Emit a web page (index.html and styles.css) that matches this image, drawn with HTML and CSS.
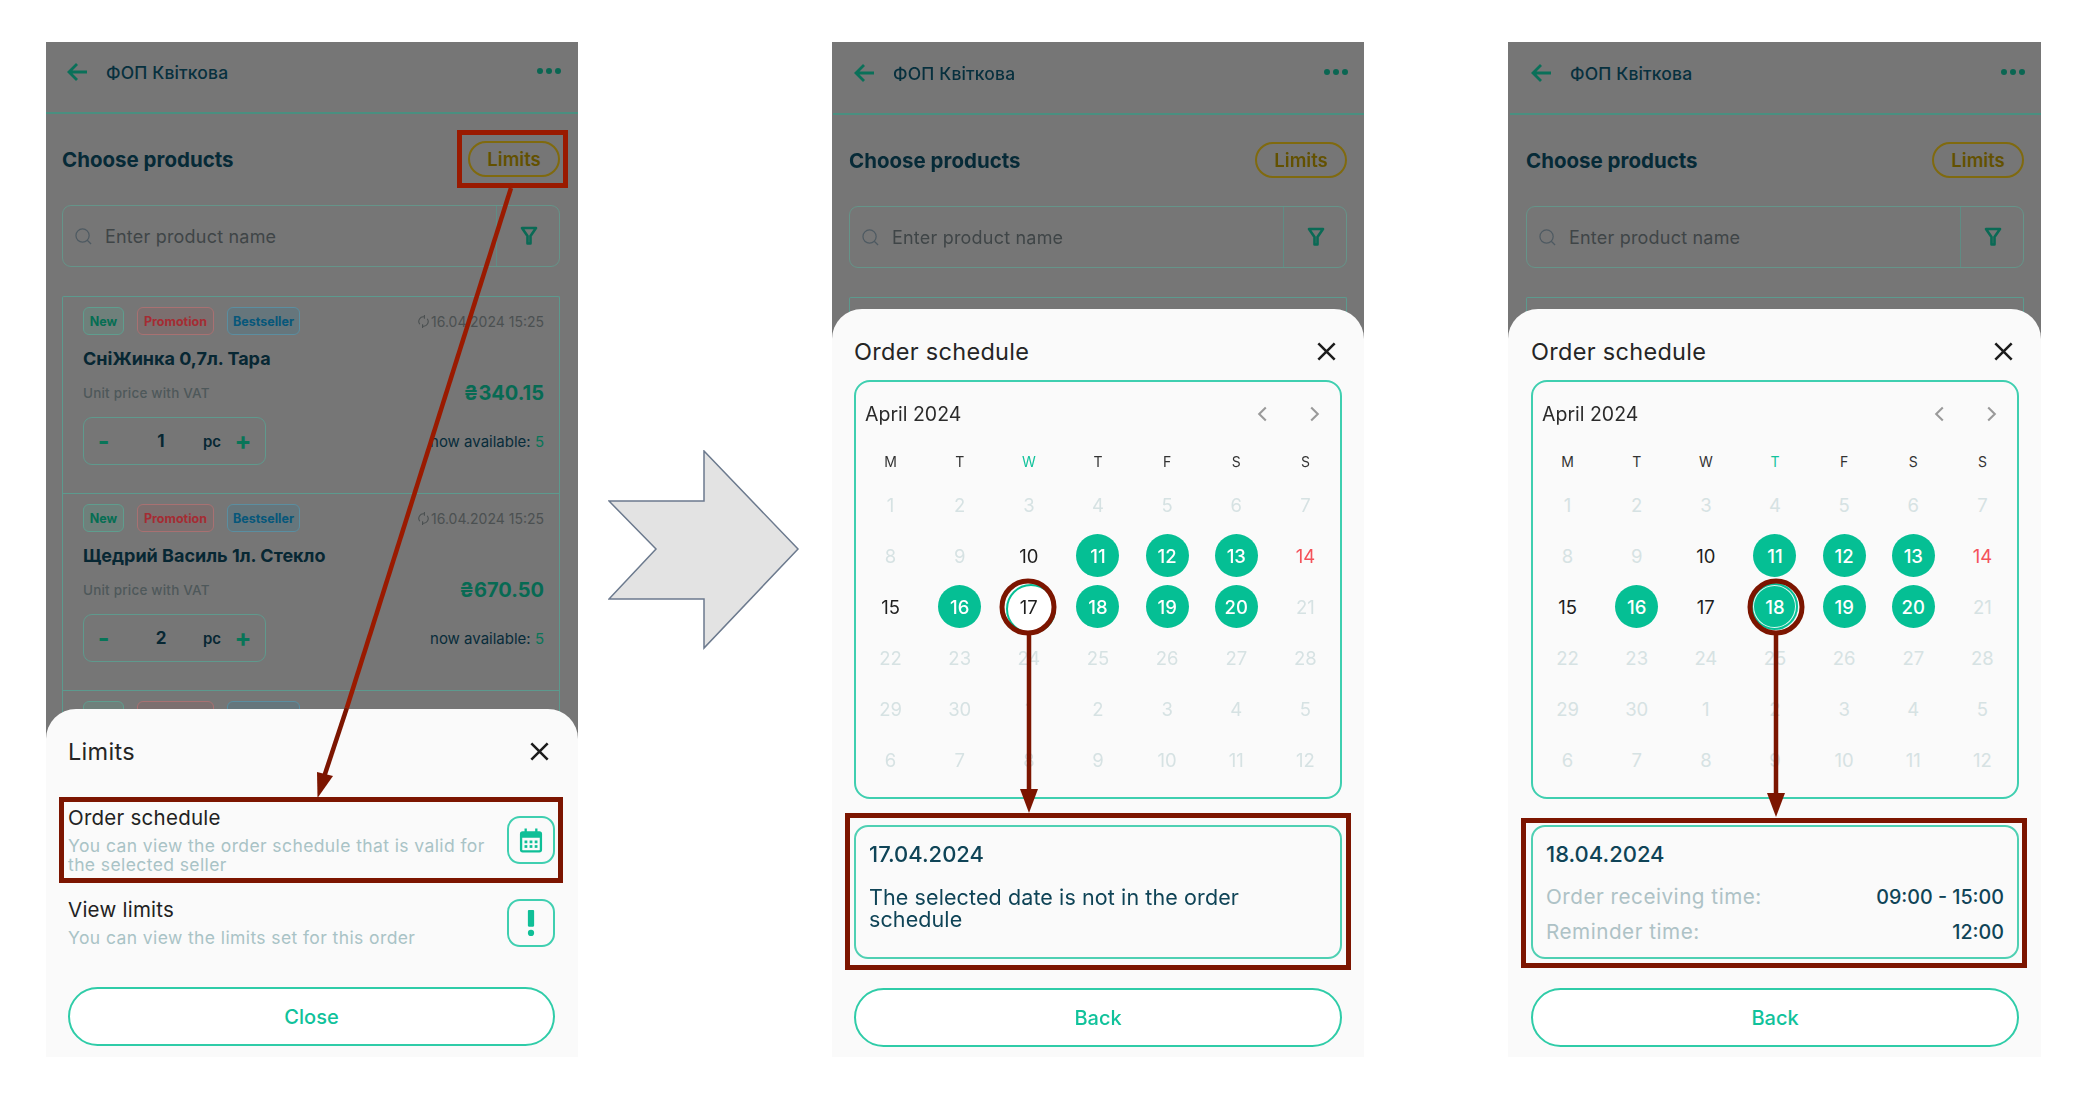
FILE: index.html
```html
<!DOCTYPE html>
<html lang="en">
<head>
<meta charset="utf-8">
<title>Order schedule</title>
<link rel="stylesheet" href="styles.css">
</head>
<body>
<main class="stage">

<!-- PHONE 1 -->
<section class="phone">
  <div class="screen">
    <header class="top">
      <svg class="ico-back" viewBox="0 0 21 20"><path d="M20 10H2M10 2 2 10l8 8"/></svg>
      <span class="top-title">ФОП Квіткова</span>
      <span class="dots"><i></i><i></i><i></i></span>
    </header>
    <div class="head-row">
      <h2>Choose products</h2>
      <span class="pill">Limits</span>
    </div>
    <div class="search">
      <svg class="ico-search" viewBox="0 0 18 18"><circle cx="8" cy="8" r="7"/><path d="m13 13 4 4"/></svg>
      <span class="ph">Enter product name</span>
      <span class="filter"><svg viewBox="0 0 18 20"><path d="M2 2h14l-5.500 8v7.500h-3V10z"/></svg></span>
    </div>
    <div class="list">
      <article class="item">
        <div class="item-top">
          <span class="tag tag-new">New</span><span class="tag tag-promo">Promotion</span><span class="tag tag-best">Bestseller</span>
          <span class="stamp"><svg viewBox="0 0 12 16"><path d="M2 11A5 5 0 0 1 7 3M10 5a5 5 0 0 1-5 8M7 1v4M5 11v4"/></svg>16.04.2024 15:25</span>
        </div>
        <h3>СніЖинка 0,7л. Тара</h3>
        <div class="price-row"><span class="unit">Unit price with VAT</span><span class="price">₴340.15</span></div>
        <div class="qty-row">
          <div class="stepper"><b class="minus">-</b><b class="num">1</b><b class="pc">pc</b><b class="plus">+</b></div>
          <span class="avail">now available: <em>5</em></span>
        </div>
      </article>
      <article class="item">
        <div class="item-top">
          <span class="tag tag-new">New</span><span class="tag tag-promo">Promotion</span><span class="tag tag-best">Bestseller</span>
          <span class="stamp"><svg viewBox="0 0 12 16"><path d="M2 11A5 5 0 0 1 7 3M10 5a5 5 0 0 1-5 8M7 1v4M5 11v4"/></svg>16.04.2024 15:25</span>
        </div>
        <h3>Щедрий Василь 1л. Стекло</h3>
        <div class="price-row"><span class="unit">Unit price with VAT</span><span class="price">₴670.50</span></div>
        <div class="qty-row">
          <div class="stepper"><b class="minus">-</b><b class="num">2</b><b class="pc">pc</b><b class="plus">+</b></div>
          <span class="avail">now available: <em>5</em></span>
        </div>
      </article>
      <article class="item">
        <div class="item-top">
          <span class="tag tag-new">New</span><span class="tag tag-promo">Promotion</span><span class="tag tag-best">Bestseller</span>
        </div>
      </article>
    </div>
  </div>

  <div class="sheet sheet-limits">
    <div class="sheet-head">
      <span>Limits</span>
      <svg class="ico-x" viewBox="0 0 18 18"><path d="M2 2l14 14M16 2 2 16"/></svg>
    </div>
    <div class="opt opt-first">
      <div class="opt-text">
        <h4>Order schedule</h4>
        <p>You can view the order schedule that is valid for the selected seller</p>
      </div>
      <span class="opt-ico"><svg viewBox="0 0 26 28"><path class="cal-fill" d="M6 1h2.500v3h9V1H20v3h2a3 3 0 0 1 3 3v17a3 3 0 0 1-3 3H4a3 3 0 0 1-3-3V7a3 3 0 0 1 3-3h2zM3.500 11v13a.5.5 0 0 0 .5.5h18a.5.5 0 0 0 .5-.5V11z"/><rect class="cal-fill" x="6" y="14" width="3" height="3"/><rect class="cal-fill" x="11.500" y="14" width="3" height="3"/><rect class="cal-fill" x="17" y="14" width="3" height="3"/><rect class="cal-fill" x="6" y="19" width="3" height="3"/><rect class="cal-fill" x="11.500" y="19" width="3" height="3"/><rect class="cal-fill" x="17" y="19" width="3" height="3"/></svg></span>
    </div>
    <div class="opt">
      <div class="opt-text">
        <h4>View limits</h4>
        <p>You can view the limits set for this order</p>
      </div>
      <span class="opt-ico"><svg viewBox="0 0 8 26"><rect class="cal-fill" x="1" y="1" width="6" height="16" rx="1"/><circle class="cal-fill" cx="4" cy="23" r="3"/></svg></span>
    </div>
    <button class="btn btn-close">Close</button>
  </div>

  <div class="mark mark-limits"></div>
  <div class="mark mark-order"></div>
  <svg class="annot" viewBox="0 0 532 1015">
    <path class="ln-bright" d="M465 146 300.800 666"/>
    <path class="ln-dark" d="M300.800 666 278 735"/>
    <path class="hd-dark" d="M271.500 756 271 730 287 734z"/>
  </svg>
</section>

<!-- BIG ARROW -->
<svg class="big-arrow" viewBox="0 0 192 200">
  <path d="M1 51H96V1L190 99 96 198V149H1L48 99z"/>
</svg>

<!-- PHONE 2 -->
<section class="phone phone-mid">
  <div class="screen screen-low">
    <header class="top">
      <svg class="ico-back" viewBox="0 0 21 20"><path d="M20 10H2M10 2 2 10l8 8"/></svg>
      <span class="top-title">ФОП Квіткова</span>
      <span class="dots"><i></i><i></i><i></i></span>
    </header>
    <div class="head-row">
      <h2>Choose products</h2>
      <span class="pill">Limits</span>
    </div>
    <div class="search">
      <svg class="ico-search" viewBox="0 0 18 18"><circle cx="8" cy="8" r="7"/><path d="m13 13 4 4"/></svg>
      <span class="ph">Enter product name</span>
      <span class="filter"><svg viewBox="0 0 18 20"><path d="M2 2h14l-5.500 8v7.500h-3V10z"/></svg></span>
    </div>
    <div class="list"></div>
  </div>

  <div class="sheet sheet-cal">
    <div class="sheet-head">
      <span>Order schedule</span>
      <svg class="ico-x" viewBox="0 0 18 18"><path d="M2 2l14 14M16 2 2 16"/></svg>
    </div>
    <div class="cal">
      <div class="cal-head">
        <span>April 2024</span>
        <span class="chev">
          <svg viewBox="0 0 10 16"><path d="M8 2 2 8l6 6"/></svg>
          <svg viewBox="0 0 10 16"><path d="m2 2 6 6-6 6"/></svg>
        </span>
      </div>
      <div class="grid week">
        <span>M</span><span>T</span><span class="now">W</span><span>T</span><span>F</span><span>S</span><span>S</span>
      </div>
      <div class="grid days">
        <span class="off">1</span><span class="off">2</span><span class="off">3</span><span class="off">4</span><span class="off">5</span><span class="off">6</span><span class="off">7</span>
        <span class="off">8</span><span class="off">9</span><span>10</span><span class="on">11</span><span class="on">12</span><span class="on">13</span><span class="red">14</span>
        <span>15</span><span class="on">16</span><span class="pick">17</span><span class="on">18</span><span class="on">19</span><span class="on">20</span><span class="off">21</span>
        <span class="off">22</span><span class="off">23</span><span class="off">24</span><span class="off">25</span><span class="off">26</span><span class="off">27</span><span class="off">28</span>
        <span class="off">29</span><span class="off">30</span><span class="off">1</span><span class="off">2</span><span class="off">3</span><span class="off">4</span><span class="off">5</span>
        <span class="off">6</span><span class="off">7</span><span class="off">8</span><span class="off">9</span><span class="off">10</span><span class="off">11</span><span class="off">12</span>
      </div>
    </div>
    <div class="info">
      <div class="info-date">17.04.2024</div>
      <p class="info-msg">The selected date is not in the order schedule</p>
    </div>
    <button class="btn">Back</button>
  </div>

  <div class="mark mark-info-a"></div>
  <svg class="annot" viewBox="0 0 532 1015">
    <circle class="ring" cx="196" cy="565" r="26"/>
    <path class="ln-dark" d="M197 591V750"/>
    <path class="hd-dark" d="M197 771 188 747H206z"/>
  </svg>
</section>

<!-- PHONE 3 -->
<section class="phone phone-last">
  <div class="screen screen-low">
    <header class="top">
      <svg class="ico-back" viewBox="0 0 21 20"><path d="M20 10H2M10 2 2 10l8 8"/></svg>
      <span class="top-title">ФОП Квіткова</span>
      <span class="dots"><i></i><i></i><i></i></span>
    </header>
    <div class="head-row">
      <h2>Choose products</h2>
      <span class="pill">Limits</span>
    </div>
    <div class="search">
      <svg class="ico-search" viewBox="0 0 18 18"><circle cx="8" cy="8" r="7"/><path d="m13 13 4 4"/></svg>
      <span class="ph">Enter product name</span>
      <span class="filter"><svg viewBox="0 0 18 20"><path d="M2 2h14l-5.500 8v7.500h-3V10z"/></svg></span>
    </div>
    <div class="list"></div>
  </div>

  <div class="sheet sheet-cal">
    <div class="sheet-head">
      <span>Order schedule</span>
      <svg class="ico-x" viewBox="0 0 18 18"><path d="M2 2l14 14M16 2 2 16"/></svg>
    </div>
    <div class="cal">
      <div class="cal-head">
        <span>April 2024</span>
        <span class="chev">
          <svg viewBox="0 0 10 16"><path d="M8 2 2 8l6 6"/></svg>
          <svg viewBox="0 0 10 16"><path d="m2 2 6 6-6 6"/></svg>
        </span>
      </div>
      <div class="grid week">
        <span>M</span><span>T</span><span>W</span><span class="now">T</span><span>F</span><span>S</span><span>S</span>
      </div>
      <div class="grid days">
        <span class="off">1</span><span class="off">2</span><span class="off">3</span><span class="off">4</span><span class="off">5</span><span class="off">6</span><span class="off">7</span>
        <span class="off">8</span><span class="off">9</span><span>10</span><span class="on">11</span><span class="on">12</span><span class="on">13</span><span class="red">14</span>
        <span>15</span><span class="on">16</span><span>17</span><span class="on pick-on">18</span><span class="on">19</span><span class="on">20</span><span class="off">21</span>
        <span class="off">22</span><span class="off">23</span><span class="off">24</span><span class="off">25</span><span class="off">26</span><span class="off">27</span><span class="off">28</span>
        <span class="off">29</span><span class="off">30</span><span class="off">1</span><span class="off">2</span><span class="off">3</span><span class="off">4</span><span class="off">5</span>
        <span class="off">6</span><span class="off">7</span><span class="off">8</span><span class="off">9</span><span class="off">10</span><span class="off">11</span><span class="off">12</span>
      </div>
    </div>
    <div class="info">
      <div class="info-date">18.04.2024</div>
      <div class="info-row info-row-first"><span>Order receiving time:</span><b>09:00 - 15:00</b></div>
      <div class="info-row"><span>Reminder time:</span><b>12:00</b></div>
    </div>
    <button class="btn">Back</button>
  </div>

  <div class="mark mark-info-b"></div>
  <svg class="annot" viewBox="0 0 532 1015">
    <circle class="ring" cx="268" cy="565" r="26"/>
    <path class="ln-dark" d="M268 591V754"/>
    <path class="hd-dark" d="M268 775 259 751H277z"/>
  </svg>
</section>

</main>
</body>
</html>
```

FILE: styles.css
```css
* { box-sizing: border-box; }
html, body { margin: 0; padding: 0; background: #fff; }
body { font-family: Inter, "Noto Sans", "Liberation Sans", sans-serif; width: 2100px; height: 1100px; overflow: hidden; }
h2, h3, h4, p { margin: 0; }

.stage { display: flex; align-items: flex-start; padding: 42px 0 0 46px; filter: blur(.3px); }
.phone { position: relative; width: 532px; height: 1015px; flex: none; overflow: hidden; }
.phone-last { margin-left: 144px; width: 533px; }
.big-arrow { width: 192px; height: 200px; flex: none; margin: 408px 32px 0 30px; }
.big-arrow path { fill: #e3e3e3; stroke: #6c7a8e; stroke-width: 1.500; }

/* dimmed screen */
.screen { background: #767676; height: 100%; }
.screen-low { padding: 1px 0 0 1px; width: calc(100% + 1px); }
.phone-last .screen-low { padding-left: 2px; }
.top { display: flex; align-items: center; height: 72px; padding: 0 17px 10px 21px; border-bottom: 2px solid #4a8f80; }
.ico-back { width: 21px; height: 20px; margin-right: 18px; flex: none; }
.ico-back path { fill: none; stroke: #0a7059; stroke-width: 2.800; }
.top-title { font-size: 17.500px; color: #07303e; font-weight: 500; letter-spacing: .15px; flex: 1; }
.dots { display: flex; gap: 3px; margin-top: -2px; }
.dots i { width: 6px; height: 6px; border-radius: 50%; background: #0a6652; }

.head-row { display: flex; align-items: center; justify-content: space-between; margin: 27px 18px 0 16px; height: 36px; }
.head-row h2 { font-size: 20.500px; font-weight: 700; color: #062a37; }
.pill { width: 92px; height: 36px; border: 2px solid #806a0e; border-radius: 18px; display: flex; align-items: center; justify-content: center; font-size: 18.500px; font-weight: 600; color: #635100; }

.search { display: flex; align-items: center; margin: 28px 18px 0 16px; height: 62px; border: 1.500px solid #659489; border-radius: 9px; padding-left: 12px; }
.ico-search { width: 17px; height: 17px; flex: none; margin-right: 13px; }
.ico-search circle, .ico-search path { fill: none; stroke: #4e5a62; stroke-width: 1.300; }
.ph { font-size: 18px; color: #3f4547; flex: 1; letter-spacing: .2px; }
.filter { width: 63px; height: 100%; border-left: 1.500px solid #5f8c84; display: flex; align-items: center; justify-content: center; padding-left: 1px; }
.filter svg { width: 18px; height: 20px; }
.filter path { fill: none; stroke: #0a6a55; stroke-width: 2.600; stroke-linejoin: round; }

.list { margin: 29px 18px 0 16px; min-height: 60px; border: 1.500px solid #5c9a8e; border-bottom: 0; border-radius: 2px 2px 0 0; }
.item { height: 197px; padding: 10px 15px 0 20px; border-bottom: 1.500px solid #5c9a8e; }
.item-top { display: flex; align-items: center; gap: 13px; }
.tag { height: 28px; border-radius: 6px; border: 1.500px solid; font-size: 12.500px; font-weight: 700; display: flex; align-items: center; justify-content: center; }
.tag-new { width: 41px; color: #066e53; border-color: #5f9d8e; background: #6f807b; }
.tag-promo { width: 77px; color: #a52c33; border-color: #a87172; background: #7c6f6f; }
.tag-best { width: 73px; color: #07577a; border-color: #5b8ea0; background: #66767c; }
.stamp { margin-left: auto; display: flex; align-items: center; gap: 2px; font-size: 14px; color: #4b5051; }
.stamp svg { width: 11px; height: 15px; }
.stamp path { fill: none; stroke: #4b5051; stroke-width: 1.200; }
.item h3 { font-size: 18px; font-weight: 700; color: #072733; line-height: 24px; margin-top: 12px; }
.price-row { display: flex; align-items: center; justify-content: space-between; height: 30px; margin-top: 7px; }
.unit { font-size: 13.500px; font-weight: 500; color: #4e585a; letter-spacing: .2px; }
.price { font-size: 20px; font-weight: 700; color: #076a53; }
.qty-row { display: flex; align-items: center; justify-content: space-between; margin-top: 9px; }
.stepper { width: 183px; height: 48px; border: 1.500px solid #5f998d; border-radius: 9px; display: grid; grid-template-columns: 39px 76px 26px 36px; align-items: center; text-align: center; }
.stepper b { font-weight: 700; color: #072733; font-size: 17px; }
.stepper .minus, .stepper .plus { color: #087558; font-size: 25px; line-height: 1; }
.stepper .pc { font-size: 15px; font-weight: 600; }
.avail { font-size: 15px; color: #082c3a; }
.avail em { font-style: normal; color: #087558; }

/* bottom sheets */
.sheet { position: absolute; left: 0; right: 0; bottom: 0; background: #fafafa; border-radius: 30px 30px 0 0; padding: 25px 22px 10px 22px; }
.phone-last .sheet { padding-left: 23px; }
.sheet-limits { height: 348px; padding-right: 23px; }
.sheet-cal { height: 748px; }
.sheet-head { display: flex; align-items: center; justify-content: space-between; height: 34px; font-size: 23.500px; color: #252525; letter-spacing: .3px; }
.ico-x { width: 21px; height: 21px; margin-right: 5px; }
.ico-x path { fill: none; stroke: #1c1c1c; stroke-width: 2.200; }

.opt { display: flex; align-items: center; justify-content: space-between; margin-top: 24px; }
.opt-first { margin-top: 38px; }
.opt-text { width: 425px; }
.opt h4 { font-size: 20.500px; font-weight: 400; color: #222; line-height: 24px; letter-spacing: .25px; }
.opt p { font-size: 17.500px; color: #a9c3c6; line-height: 19px; margin-top: 6px; letter-spacing: .4px; }
.opt-ico { width: 48px; height: 48px; border: 2px solid #3fcfb0; border-radius: 13px; display: flex; align-items: center; justify-content: center; }
.opt-ico svg { height: 27px; width: 24px; }
.cal-fill { fill: #0fbf97; }
.btn { display: block; width: 100%; height: 59px; border: 2px solid #2fcca8; border-radius: 30px; background: #fff; color: #10c29b; font: 500 20px Inter, "Noto Sans", sans-serif; }
.btn-close { margin-top: 40px; }

/* calendar */
.cal { height: 419px; margin-top: 12px; border: 2px solid #3fcfb0; border-radius: 16px; }
.cal-head { display: flex; align-items: center; justify-content: space-between; height: 62px; padding: 2px 20px 0 9px; font-size: 19.500px; color: #2b2b2b; }
.chev { display: flex; gap: 41px; }
.chev svg { width: 11px; height: 18px; }
.chev path { fill: none; stroke: #9a9a9a; stroke-width: 1.900; }
.grid { display: grid; grid-template-columns: repeat(7, 1fr); text-align: center; }
.week { height: 35px; align-items: center; font-size: 14px; color: #333; }
.week .now { color: #12c39c; }
.days { grid-auto-rows: 51px; font-size: 18.500px; color: #1e1e1e; }
.days span { display: flex; align-items: center; justify-content: center; position: relative; z-index: 0; }
.days .off { color: #d6e2e3; }
.days .red { color: #f4525a; }
.days .on { color: #fff; font-weight: 500; }
.days .on::before, .days .pick::before { content: ""; position: absolute; left: 50%; top: 50%; width: 43px; height: 43px; margin: -21.500px 0 0 -21.500px; border-radius: 50%; z-index: -1; }
.days .on::before { background: #05bf94; }
.days .pick::before { background: #fff; border: 2.500px solid #05bf94; width: 46px; height: 46px; margin: -23px 0 0 -23px; }
.days .pick-on::before { width: 47px; height: 47px; margin: -23.500px 0 0 -23.500px; background: #05bf94; box-shadow: inset 0 0 0 2px #05bf94, inset 0 0 0 3px #dff7f1; }

/* info card */
.info { height: 134px; margin-top: 26px; border: 2px solid #4fd0b3; border-radius: 14px; padding: 14px 13px 0; }
.info-date { font-size: 22px; font-weight: 500; color: #0f4457; line-height: 26px; }
.info-msg { font-size: 21.500px; font-weight: 400; color: #0f4457; line-height: 22px; margin-top: 19px; width: 420px; letter-spacing: .1px; }
.info-row { display: flex; justify-content: space-between; font-size: 20.700px; line-height: 24px; margin-top: 11px; color: #aec2c6; letter-spacing: .5px; }
.info-row-first { margin-top: 18px; }
.info-row b { font-weight: 500; font-size: 19.700px; color: #0f4457; letter-spacing: 0; }
.sheet-cal .btn { margin-top: 29px; }

/* annotations */
.mark { position: absolute; border: 5px solid #7c1500; }
.mark-limits { left: 411px; top: 88px; width: 111px; height: 58px; border-color: #9a1a00; }
.mark-order { left: 13px; top: 755px; width: 504px; height: 86px; }
.mark-info-a { left: 13px; top: 771px; width: 506px; height: 157px; }
.mark-info-b { left: 13px; top: 776px; width: 506px; height: 150px; }
.annot { position: absolute; left: 0; top: 0; width: 532px; height: 1015px; pointer-events: none; }
.ln-bright { fill: none; stroke: #9a1a00; stroke-width: 4.500; }
.ln-dark { fill: none; stroke: #7c1500; stroke-width: 4.500; }
.hd-dark { fill: #7c1500; }
.ring { fill: none; stroke: #7c1500; stroke-width: 5; }
```
